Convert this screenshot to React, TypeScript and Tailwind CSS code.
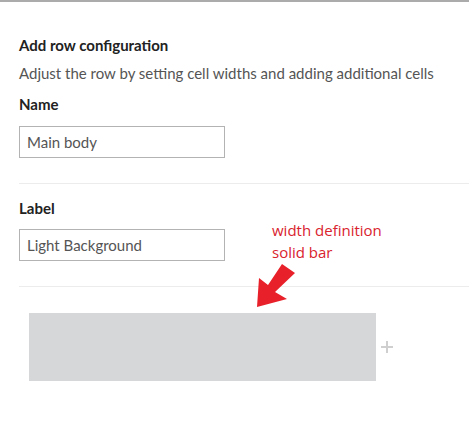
import React from 'react';

const fieldClass =
  'block w-[206px] h-[32px] border border-[#b3b3b3] bg-white px-[7px] text-[15px] text-[#555] outline-none';

const Arrow: React.FC = () => (
  <svg className="absolute left-0 top-0 pointer-events-none" width="469" height="421" viewBox="0 0 469 421">
    <polygon
      points="282,262 295,271 275,290 287,297 257,305 259,276 268,283"
      fill="#e8202a"
    />
  </svg>
);

export default function App() {
  return (
    <div className="relative w-[469px] h-[421px] bg-white border-t-2 border-[#ababab] font-['Lato','Liberation_Sans',sans-serif] overflow-hidden">
      <div className="pl-[19px] pt-[33px]">
        <div className="text-[15px] leading-[20px] font-bold text-[#222]">Add row configuration</div>
        <div className="mt-[8px] text-[15px] leading-[20px] text-[#555]">
          Adjust the row by setting cell widths and adding additional cells
        </div>
        <div className="mt-[11px] text-[15px] leading-[20px] font-bold text-[#222]">Name</div>
        <input className={`mt-[12px] ${fieldClass}`} defaultValue="Main body" readOnly />

        <div className="mt-[25px] border-t border-[#ececec]" />

        <div className="mt-[14px] text-[15px] leading-[20px] font-bold text-[#222]">Label</div>
        <input className={`mt-[11px] ${fieldClass}`} defaultValue="Light Background" readOnly />

        <div className="mt-[25px] border-t border-[#ececec]" />

        <div className="mt-[26px] ml-[10px] flex items-center">
          <div className="w-[347px] h-[68px] bg-[#d6d7d9]" />
          <span className="ml-[5px] relative w-[12px] h-[12px]">
            <span className="absolute left-0 top-[5px] w-[12px] h-[2px] bg-[#cfcfcf]" />
            <span className="absolute left-[5px] top-0 w-[2px] h-[12px] bg-[#cfcfcf]" />
          </span>
        </div>
      </div>

      <div className="absolute left-[272px] top-[217px] font-['Open_Sans',sans-serif] text-[15px] leading-[22px] text-[#d9232e]">
        <div>width definition</div>
        <div>solid bar</div>
      </div>
      <Arrow />
    </div>
  );
}
